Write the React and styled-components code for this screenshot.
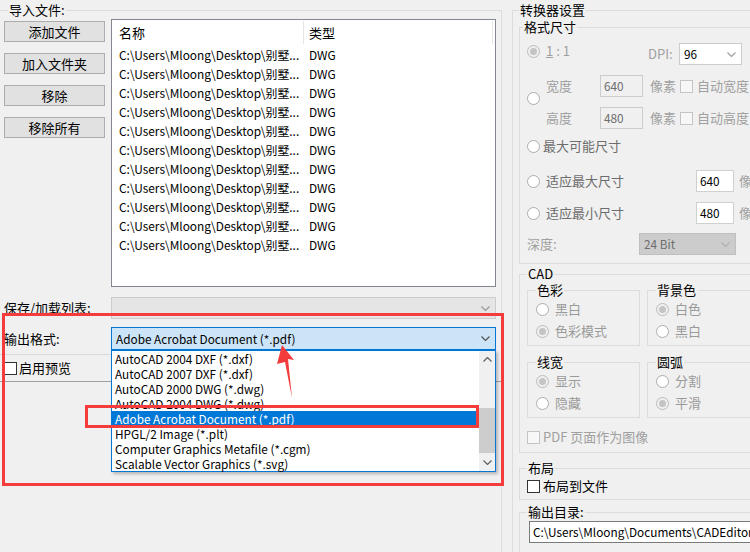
import React from "react";
import styled, { createGlobalStyle } from "styled-components";

const files = Array.from({ length: 11 }, (_, i) => ({
  id: i,
  name: "C:\\Users\\Mloong\\Desktop\\别墅...",
  type: "DWG",
}));

const formats = [
  "AutoCAD 2004 DXF (*.dxf)",
  "AutoCAD 2007 DXF (*.dxf)",
  "AutoCAD 2000 DWG (*.dwg)",
  "AutoCAD 2004 DWG (*.dwg)",
  "Adobe Acrobat Document (*.pdf)",
  "HPGL/2 Image (*.plt)",
  "Computer Graphics Metafile (*.cgm)",
  "Scalable Vector Graphics (*.svg)",
];

const GlobalStyle = createGlobalStyle`
  html, body {
    margin: 0;
    padding: 0;
    background: #f0f0f0;
  }
  body {
    font-family: "Noto Sans CJK SC", "Noto Sans", sans-serif;
    font-size: 13px;
    line-height: 14px;
    color: #000;
  }
  * { box-sizing: border-box; }
`;

const Window = styled.div`
  display: flex;
  width: 750px;
  height: 552px;
  overflow: hidden;
  background: #f0f0f0;
`;

const LeftPane = styled.div`
  position: relative;
  flex: none;
  width: 502px;
  padding-top: 3px;
`;

const RightPane = styled.div`
  flex: 1;
  min-width: 0;
  overflow: hidden;
  padding: 3px 0 0 10px;
`;

const Group = styled.fieldset`
  margin: ${(p) => p.$mt || 0}px 0 0 0;
  min-width: 0;
  width: ${(p) => (p.$width ? `${p.$width}px` : "auto")};
  height: ${(p) => (p.$height ? `${p.$height}px` : "auto")};
  padding: ${(p) => p.$pad || "0"};
  border: 1px solid #dcdcdc;
  ${(p) => p.$open && "border-right: none; border-bottom: none;"}
  ${(p) => p.$noLeft && "border-left: none; border-bottom: none;"}
`;

const Legend = styled.legend`
  padding: 0 1px;
  margin-left: ${(p) => p.$offset || 0}px;
  line-height: 14px;
  color: #000;
`;

const ImportBody = styled.div`
  display: flex;
  align-items: flex-start;
  gap: 6px;
  margin-top: 2px;
`;

const ButtonColumn = styled.div`
  display: flex;
  flex-direction: column;
  gap: 11px;
  width: 101px;
  margin-top: 2px;
`;

const Button = styled.button`
  height: 21px;
  padding: 0;
  background: #e1e1e1;
  border: 1px solid #adadad;
  font: inherit;
  color: #000;
`;

const ListView = styled.div`
  width: 385px;
  height: 268px;
  background: #fff;
  border: 1px solid #828790;
`;

const ListGrid = styled.div`
  display: grid;
  grid-template-columns: 192px 189px;
  height: ${(p) => p.$h}px;
  align-items: center;
  font-size: ${(p) => (p.$head ? 13 : 11.9)}px;
`;

const Cell = styled.div`
  height: 100%;
  display: flex;
  align-items: center;
  padding-left: ${(p) => p.$pl}px;
  white-space: nowrap;
  overflow: hidden;
  ${(p) => p.$divider && "border-right: 1px solid #e5e5e5; height: 23px;"}
`;

const FieldRow = styled.div`
  display: flex;
  align-items: center;
  margin-top: ${(p) => p.$mt}px;
`;

const FieldLabel = styled.div`
  width: 107px;
`;

const Combo = styled.div`
  display: flex;
  align-items: center;
  justify-content: space-between;
  width: ${(p) => p.$w}px;
  height: ${(p) => p.$h}px;
  padding: 0 5px 0 ${(p) => p.$pl || 4}px;
  font-size: 11.8px;
  border: 1px solid ${(p) => (p.$active ? "#0078d7" : p.$dim ? "#bfbfbf" : "#cccccc")};
  background: ${(p) => (p.$active ? "#cce4f7" : p.$dim ? "#cccccc" : p.$blank ? "#e5e5e5" : "#fff")};
  color: ${(p) => (p.$dim ? "#6d6d6d" : "#000")};
  white-space: nowrap;
`;

const Separator = styled.div`
  height: 1px;
  width: ${(p) => p.$w}px;
  margin: ${(p) => p.$mt || 0}px 0 0 -4px;
  background: ${(p) => (p.$dark ? "#a0a0a0" : "#dadada")};
`;

const CheckRow = styled.div`
  display: flex;
  align-items: center;
  gap: ${(p) => p.$gap || 3}px;
  height: ${(p) => p.$h || 20}px;
  margin-top: ${(p) => p.$mt || 0}px;
  color: ${(p) => p.$color || "#000"};
  white-space: nowrap;
`;

const CheckBox = styled.span`
  flex: none;
  width: 13px;
  height: 13px;
  border: 1px solid ${(p) => (p.$disabled ? "#c4c4c4" : "#333")};
  background: ${(p) => (p.$disabled ? "#f7f7f7" : "#fff")};
`;

const Radio = styled.span`
  position: relative;
  flex: none;
  width: 13px;
  height: 13px;
  margin-top: ${(p) => p.$mt || 0}px;
  border-radius: 50%;
  border: 1px solid ${(p) => (p.$checked ? "#bcbcbc" : "#adadad")};
  background: ${(p) => (p.$checked ? "#f0f0f0" : "#fff")};
  &::after {
    content: "";
    display: ${(p) => (p.$checked ? "block" : "none")};
    position: absolute;
    left: 2px;
    top: 2px;
    width: 7px;
    height: 7px;
    border-radius: 50%;
    background: #c4c4c4;
  }
`;

const TextBox = styled.div`
  flex: none;
  display: flex;
  align-items: center;
  width: ${(p) => p.$w}px;
  height: 22px;
  padding-left: ${(p) => p.$pl || 3}px;
  font-size: 11.8px;
  border: 1px solid ${(p) => (p.$disabled ? "#cccccc" : p.$strong ? "#7a7a7a" : "#d0d0d0")};
  background: ${(p) => (p.$disabled ? "#f0f0f0" : "#fff")};
  color: ${(p) => (p.$disabled ? "#6d6d6d" : "#000")};
  white-space: nowrap;
  overflow: hidden;
`;

const DropList = styled.div`
  position: absolute;
  left: 111px;
  top: 350px;
  width: 385px;
  height: 122px;
  display: flex;
  background: #fff;
  border: 1px solid #0078d7;
  box-shadow: 2px 2px 3px rgba(0, 0, 0, 0.25);
`;

const DropItems = styled.div`
  flex: 1;
  display: flex;
  flex-direction: column;
`;

const DropItem = styled.div`
  height: 15px;
  line-height: 15px;
  padding-left: 3px;
  font-size: 11.8px;
  white-space: nowrap;
  background: ${(p) => (p.$selected ? "#0078d7" : "transparent")};
  color: ${(p) => (p.$selected ? "#fff" : "#000")};
`;

const ScrollBar = styled.div`
  width: 16px;
  display: flex;
  flex-direction: column;
  background: #f0f0f0;
`;

const ScrollButton = styled.div`
  height: 17px;
  display: flex;
  align-items: center;
  justify-content: center;
`;

const ScrollTrack = styled.div`
  flex: 1;
  padding-top: 40px;
`;

const ScrollThumb = styled.div`
  height: 45px;
  background: #cdcdcd;
`;

const Mark = styled.div`
  position: absolute;
  left: ${(p) => p.$x}px;
  top: ${(p) => p.$y}px;
  width: ${(p) => p.$w}px;
  height: ${(p) => p.$h}px;
  border: 3px solid #f43c3c;
  pointer-events: none;
`;

const ArrowSvg = styled.svg`
  position: absolute;
  left: 270px;
  top: 340px;
`;

const Row = styled.div`
  display: ${(p) => (p.$grid ? "grid" : "flex")};
  grid-template-columns: ${(p) => p.$cols || "none"};
  align-items: ${(p) => p.$align || "center"};
  height: ${(p) => p.$h}px;
  margin-top: ${(p) => p.$mt || 0}px;
  white-space: nowrap;
`;

const OptionText = styled.span`
  margin-left: 3px;
  color: ${(p) => p.$color || "#6d6d6d"};
`;

const Dim = styled.span`
  color: #a0a0a0;
  margin-left: ${(p) => p.$ml || 0}px;
  width: ${(p) => (p.$w ? `${p.$w}px` : "auto")};
  flex: none;
  align-self: ${(p) => (p.$center ? "center" : "auto")};
`;

const SizeBlock = styled.div`
  display: flex;
  flex-direction: column;
  gap: 10px;
  margin-left: 6px;
`;

const SizeRow = styled.div`
  display: flex;
  align-items: center;
  height: 22px;
`;

const SubGrid = styled.div`
  display: grid;
  grid-template-columns: 113px 113px;
  column-gap: 7px;
  row-gap: 9px;
  margin-top: 2px;
`;

const SubOptions = styled.div`
  display: flex;
  flex-direction: column;
  gap: 2px;
  padding-top: 2px;
`;

const Chevron = ({ color = "#7a7a7a", up = false }) => (
  <svg width="9" height="5" viewBox="0 0 9 5">
    <polyline
      points={up ? "0.5,4.5 4.5,0.5 8.5,4.5" : "0.5,0.5 4.5,4.5 8.5,0.5"}
      fill="none"
      stroke={color}
      strokeWidth="1.2"
    />
  </svg>
);

const Option = ({ checked, label, mt }) => (
  <CheckRow $h={20} $mt={mt}>
    <Radio $checked={checked} />
    <OptionText $color="#9a9a9a">{label}</OptionText>
  </CheckRow>
);

export default function App() {
  return (
    <>
      <GlobalStyle />
      <Window>
        <LeftPane>
          <Group $noLeft $height={549} $pad="0 5px 0 4px">
            <Legend $offset={4}>导入文件:</Legend>
            <ImportBody>
              <ButtonColumn>
                <Button>添加文件</Button>
                <Button>加入文件夹</Button>
                <Button>移除</Button>
                <Button>移除所有</Button>
              </ButtonColumn>
              <ListView>
                <ListGrid $h={25} $head>
                  <Cell $pl={7} $divider>名称</Cell>
                  <Cell $pl={5} $divider>类型</Cell>
                </ListGrid>
                {files.map((f) => (
                  <ListGrid key={f.id} $h={19}>
                    <Cell $pl={7}>{f.name}</Cell>
                    <Cell $pl={5}>{f.type}</Cell>
                  </ListGrid>
                ))}
              </ListView>
            </ImportBody>

            <FieldRow $mt={10}>
              <FieldLabel>保存/加载列表:</FieldLabel>
              <Combo $w={385} $h={22} $blank>
                <span />
                <Chevron color="#9a9a9a" />
              </Combo>
            </FieldRow>
            <FieldRow $mt={8}>
              <FieldLabel>输出格式:</FieldLabel>
              <Combo $w={385} $h={23} $active>
                <span>Adobe Acrobat Document (*.pdf)</span>
                <Chevron color="#555" />
              </Combo>
            </FieldRow>
            <Separator $w={111} $mt={4} />
            <CheckRow $h={26} $gap={2}>
              <CheckBox />
              <span>启用预览</span>
            </CheckRow>
            <Separator $w={502} $dark />
          </Group>

          <DropList>
            <DropItems>
              {formats.map((f, i) => (
                <DropItem key={f} $selected={i === 4}>
                  {f}
                </DropItem>
              ))}
            </DropItems>
            <ScrollBar>
              <ScrollButton>
                <Chevron color="#606060" up />
              </ScrollButton>
              <ScrollTrack>
                <ScrollThumb />
              </ScrollTrack>
              <ScrollButton>
                <Chevron color="#606060" />
              </ScrollButton>
            </ScrollBar>
          </DropList>

          <Mark $x={2} $y={313} $w={502} $h={173} />
          <Mark $x={85} $y={405} $w={394} $h={23} />
          <ArrowSvg width="30" height="62" viewBox="0 0 30 62">
            <polygon points="12,5 24,20 18,19 22,58 15,22 7,24" fill="#f43c3c" />
          </ArrowSvg>
        </LeftPane>

        <RightPane>
          <Group $open $width={300} $height={560} $pad="0 0 0 6px">
            <Legend>转换器设置</Legend>

            <Group $mt={3} $width={240} $pad="0 0 8px 7px">
              <Legend $offset={-4}>格式尺寸</Legend>

              <Row $grid $cols="121px 31px 63px" $h={22} $mt={9} $align="start">
                <CheckRow $h={15}>
                  <Radio $checked $mt={1} />
                  <Dim $ml={3}>
                    <u>1</u> : 1
                  </Dim>
                </CheckRow>
                <Dim $center>DPI:</Dim>
                <Combo $w={63} $h={22}>
                  <span>96</span>
                  <Chevron color="#a0a0a0" />
                </Combo>
              </Row>

              <Row $h={54} $mt={10} $align="start">
                <Radio $mt={17} />
                <SizeBlock>
                  <SizeRow>
                    <Dim $w={54}>宽度</Dim>
                    <TextBox $w={43} $disabled>640</TextBox>
                    <Dim $ml={7} $w={30}>像素</Dim>
                    <CheckBox $disabled />
                    <Dim $ml={4}>自动宽度</Dim>
                  </SizeRow>
                  <SizeRow>
                    <Dim $w={54}>高度</Dim>
                    <TextBox $w={43} $disabled>480</TextBox>
                    <Dim $ml={7} $w={30}>像素</Dim>
                    <CheckBox $disabled />
                    <Dim $ml={4}>自动高度</Dim>
                  </SizeRow>
                </SizeBlock>
              </Row>

              <Row $h={20} $mt={7}>
                <Radio />
                <OptionText>最大可能尺寸</OptionText>
              </Row>

              <Row $grid $cols="169px 38px auto" $h={22} $mt={14}>
                <CheckRow $h={22}>
                  <Radio />
                  <OptionText>适应最大尺寸</OptionText>
                </CheckRow>
                <TextBox $w={38}>640</TextBox>
                <Dim $ml={5}>像素</Dim>
              </Row>

              <Row $grid $cols="169px 38px auto" $h={22} $mt={10}>
                <CheckRow $h={22}>
                  <Radio />
                  <OptionText>适应最小尺寸</OptionText>
                </CheckRow>
                <TextBox $w={38}>480</TextBox>
                <Dim $ml={5}>像素</Dim>
              </Row>

              <Row $grid $cols="112px 97px" $h={22} $mt={9}>
                <Dim>深度:</Dim>
                <Combo $w={97} $h={22} $dim>
                  <span>24 Bit</span>
                  <Chevron color="#b0b0b0" />
                </Combo>
              </Row>
            </Group>

            <Group $mt={3} $width={240} $pad="0 0 5px 7px">
              <Legend>CAD</Legend>
              <SubGrid>
                <Group $width={113} $pad="0 0 4px 8px">
                  <Legend>色彩</Legend>
                  <SubOptions>
                    <Option label="黑白" />
                    <Option label="色彩模式" checked />
                  </SubOptions>
                </Group>
                <Group $width={113} $pad="0 0 4px 8px">
                  <Legend>背景色</Legend>
                  <SubOptions>
                    <Option label="白色" checked />
                    <Option label="黑白" />
                  </SubOptions>
                </Group>
                <Group $width={113} $pad="0 0 4px 8px">
                  <Legend>线宽</Legend>
                  <SubOptions>
                    <Option label="显示" checked />
                    <Option label="隐藏" />
                  </SubOptions>
                </Group>
                <Group $width={113} $pad="0 0 4px 8px">
                  <Legend>圆弧</Legend>
                  <SubOptions>
                    <Option label="分割" />
                    <Option label="平滑" checked />
                  </SubOptions>
                </Group>
              </SubGrid>
              <CheckRow $h={20} $mt={9} $color="#a0a0a0">
                <CheckBox $disabled />
                <span>PDF 页面作为图像</span>
              </CheckRow>
            </Group>

            <Group $mt={8} $width={240} $pad="0 0 3px 7px">
              <Legend>布局</Legend>
              <CheckRow $h={20} $mt={1}>
                <CheckBox />
                <span>布局到文件</span>
              </CheckRow>
            </Group>

            <Group $mt={5} $width={240} $pad="0 0 10px 9px">
              <Legend $offset={-2}>输出目录:</Legend>
              <Row $h={22} $mt={2}>
                <TextBox $w={260} $strong>
                  C:\Users\Mloong\Documents\CADEditorX 14\Output
                </TextBox>
              </Row>
            </Group>
          </Group>
        </RightPane>
      </Window>
    </>
  );
}
